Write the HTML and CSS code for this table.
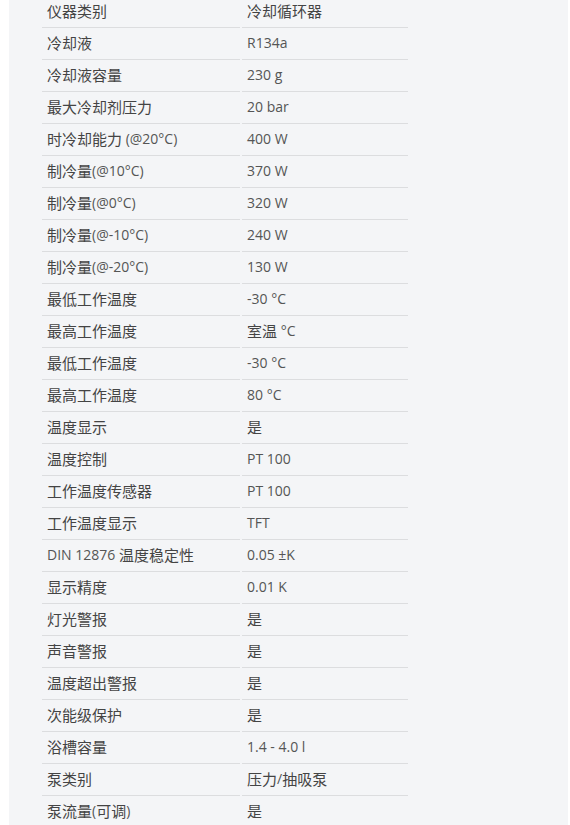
FILE: index.html
```html
<!DOCTYPE html>
<html lang="zh">
<head>
<meta charset="utf-8">
<link rel="stylesheet" href="styles.css">
</head>
<body>
<div class="panel">
  <div class="specs">
    <div class="k"><span class="zh">仪器类别</span></div><div class="v"><span class="zh">冷却循环器</span></div>
    <div class="k"><span class="zh">冷却液</span></div><div class="v">R134a</div>
    <div class="k"><span class="zh">冷却液容量</span></div><div class="v">230 g</div>
    <div class="k"><span class="zh">最大冷却剂压力</span></div><div class="v">20 bar</div>
    <div class="k"><span class="zh">时冷却能力</span>&nbsp;(@20°C)</div><div class="v">400 W</div>
    <div class="k"><span class="zh">制冷量</span>(@10°C)</div><div class="v">370 W</div>
    <div class="k"><span class="zh">制冷量</span>(@0°C)</div><div class="v">320 W</div>
    <div class="k"><span class="zh">制冷量</span>(@-10°C)</div><div class="v">240 W</div>
    <div class="k"><span class="zh">制冷量</span>(@-20°C)</div><div class="v">130 W</div>
    <div class="k"><span class="zh">最低工作温度</span></div><div class="v">-30 °C</div>
    <div class="k"><span class="zh">最高工作温度</span></div><div class="v"><span class="zh">室温</span>&nbsp;°C</div>
    <div class="k"><span class="zh">最低工作温度</span></div><div class="v">-30 °C</div>
    <div class="k"><span class="zh">最高工作温度</span></div><div class="v">80 °C</div>
    <div class="k"><span class="zh">温度显示</span></div><div class="v"><span class="zh">是</span></div>
    <div class="k"><span class="zh">温度控制</span></div><div class="v">PT 100</div>
    <div class="k"><span class="zh">工作温度传感器</span></div><div class="v">PT 100</div>
    <div class="k"><span class="zh">工作温度显示</span></div><div class="v">TFT</div>
    <div class="k">DIN 12876&nbsp;<span class="zh">温度稳定性</span></div><div class="v">0.05 ±K</div>
    <div class="k"><span class="zh">显示精度</span></div><div class="v">0.01 K</div>
    <div class="k"><span class="zh">灯光警报</span></div><div class="v"><span class="zh">是</span></div>
    <div class="k"><span class="zh">声音警报</span></div><div class="v"><span class="zh">是</span></div>
    <div class="k"><span class="zh">温度超出警报</span></div><div class="v"><span class="zh">是</span></div>
    <div class="k"><span class="zh">次能级保护</span></div><div class="v"><span class="zh">是</span></div>
    <div class="k"><span class="zh">浴槽容量</span></div><div class="v">1.4 - 4.0 l</div>
    <div class="k"><span class="zh">泵类别</span></div><div class="v"><span class="zh">压力</span>/<span class="zh">抽吸泵</span></div>
    <div class="k"><span class="zh">泵流量</span>(<span class="zh">可调</span>)</div><div class="v"><span class="zh">是</span></div>
  </div>
</div>
</body>
</html>
```

FILE: styles.css
```css
html, body {
  margin: 0;
  padding: 0;
  background: #ffffff;
}
body {
  overflow: hidden;
  height: 825px;
}
.panel {
  margin-left: 9px;
  width: 559px;
  min-height: 900px;
  background: #f4f5f7;
  padding-left: 33px;
  box-sizing: border-box;
}
.specs {
  display: grid;
  grid-template-columns: 198px 166px;
  column-gap: 2px;
  margin-top: -4px;
  font-family: "Open Sans", "Noto Sans CJK SC", sans-serif;
  font-size: 14px;
  color: #555555;
}
.k, .v {
  box-sizing: border-box;
  height: 32px;
  display: flex;
  align-items: center;
  padding: 0 0 2px 5px;
  border-bottom: 1px solid #dcdddf;
  white-space: nowrap;
}
.zh {
  font-family: "Noto Sans CJK SC", sans-serif;
  font-size: 15px;
  color: #444444;
}
```
